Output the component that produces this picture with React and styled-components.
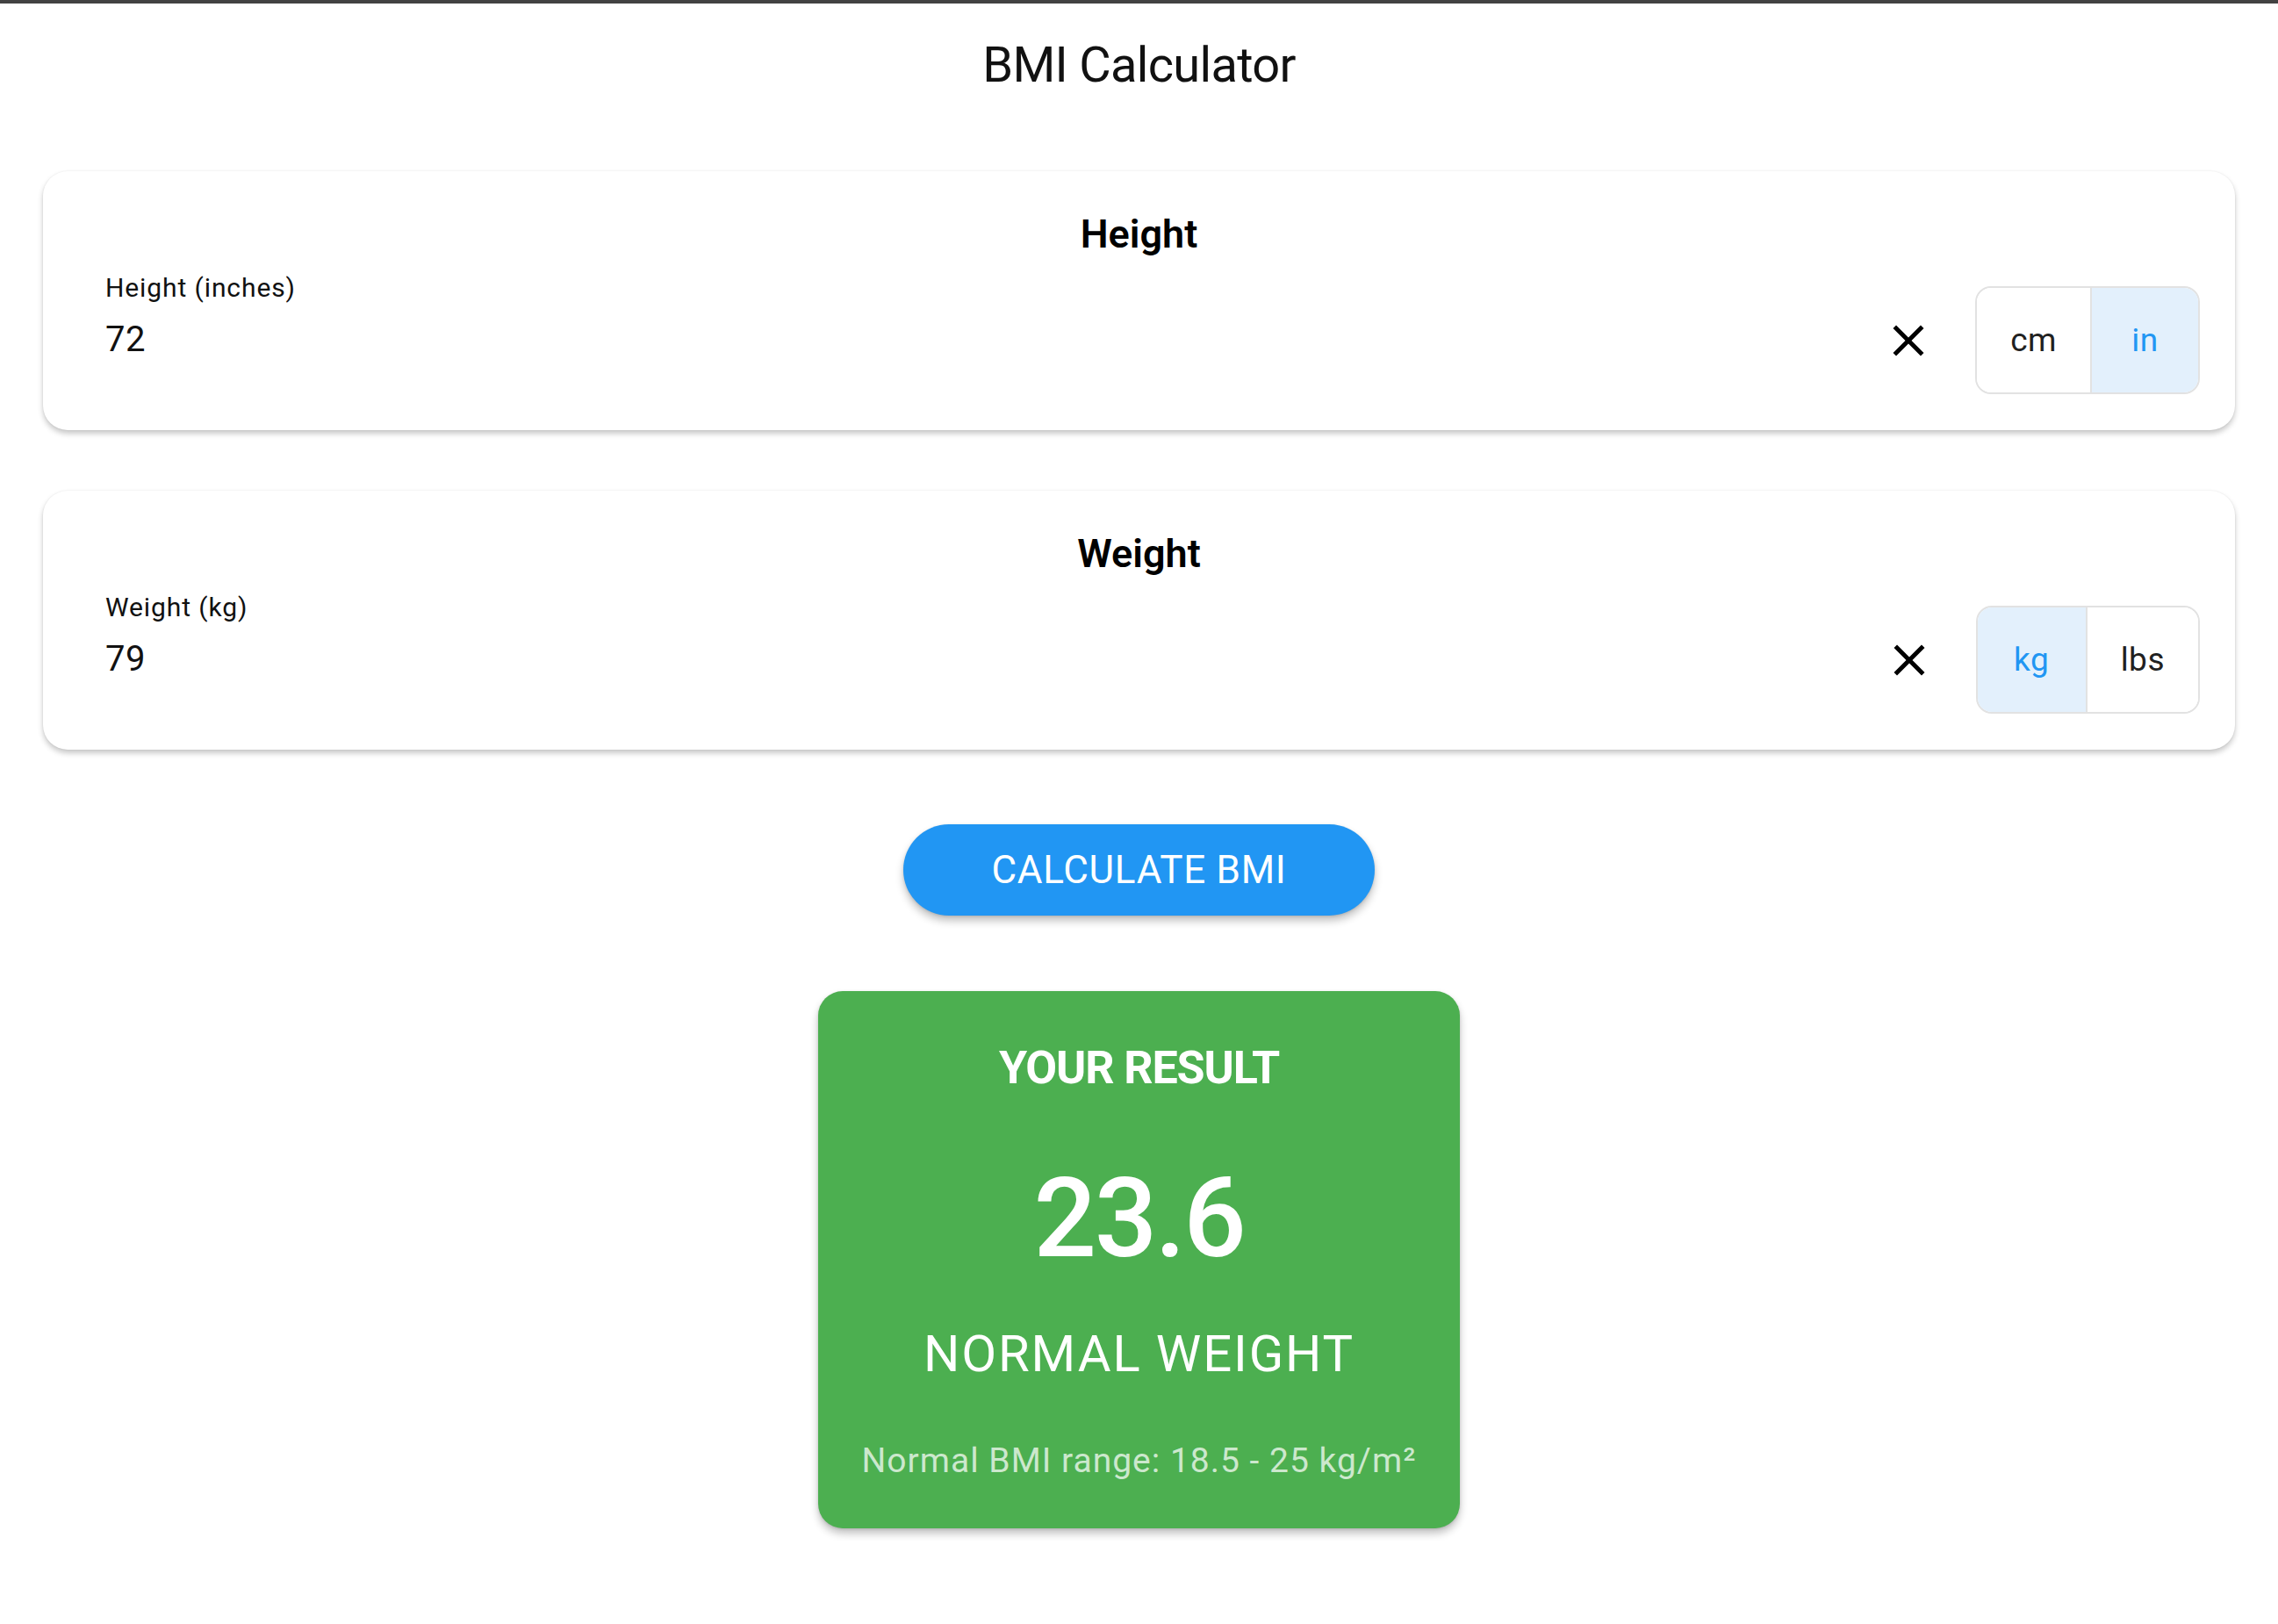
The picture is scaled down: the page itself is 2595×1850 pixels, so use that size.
import React, { useState } from 'react';
import styled, { createGlobalStyle } from 'styled-components';

const GlobalStyle = createGlobalStyle`
	* {
		box-sizing: border-box;
	}
	body {
		margin: 0;
		background: #ffffff;
		font-family: Roboto, 'Noto Sans', 'Liberation Sans', sans-serif;
		color: #000000;
	}
`;

const TopBar = styled.div`
	height: 4px;
	background: #424242;
`;

const Page = styled.main`
	display: flex;
	flex-direction: column;
	align-items: center;
	padding: 37px 49px 80px;
`;

const Title = styled.h1`
	margin: 0 0 87px;
	font-size: 56px;
	font-weight: 400;
	line-height: 1.2;
	letter-spacing: -0.7px;
	color: #111111;
`;

const Card = styled.section`
	width: 100%;
	background: #ffffff;
	border-radius: 28px;
	padding: 45px 40px 41px;
	box-shadow: 0 4px 6px rgba(0, 0, 0, 0.22), 0 0 2px rgba(0, 0, 0, 0.08);
	margin-bottom: ${props => props.gap || 0}px;
`;

const CardTitle = styled.h2`
	margin: 0 0 16px;
	text-align: center;
	font-size: 45px;
	font-weight: 600;
	line-height: 1.2;
`;

const Row = styled.div`
	display: flex;
	align-items: flex-start;
`;

const Field = styled.div`
	flex: 1;
	display: flex;
	flex-direction: column;
	gap: 17px;
	padding-left: 31px;
`;

const Label = styled.span`
	font-size: 30px;
	line-height: 1.2;
	color: #111111;
	letter-spacing: 0.9px;
`;

const Value = styled.span`
	font-size: 40px;
	line-height: 1.2;
	color: #111111;
	letter-spacing: 0.5px;
`;

const Actions = styled.div`
	display: flex;
	align-items: center;
	gap: 46px;
	margin-top: 16px;
`;

const ClearButton = styled.button`
	display: flex;
	align-items: center;
	justify-content: center;
	width: 60px;
	height: 60px;
	padding: 0;
	border: none;
	background: none;
	cursor: pointer;
	& svg {
		width: 60px;
		height: 60px;
		fill: #000000;
	}
`;

const Toggle = styled.div`
	display: flex;
	height: 123px;
	border: 2px solid #e2e2e2;
	border-radius: 18px;
	overflow: hidden;
`;

const Segment = styled.button`
	min-width: 123px;
	padding: 0 38px;
	border: none;
	border-left: ${props => (props.first ? 'none' : '2px solid #e2e2e2')};
	background: ${props => (props.active ? '#e3f0fc' : '#ffffff')};
	color: ${props => (props.active ? '#2196f3' : '#212121')};
	font-family: Roboto, 'Noto Sans', sans-serif;
	font-size: 37px;
	letter-spacing: 0.5px;
	cursor: pointer;
`;

const CalculateButton = styled.button`
	width: 537px;
	height: 104px;
	margin: 85px 0 86px;
	border: none;
	border-radius: 52px;
	background: #2196f3;
	color: #ffffff;
	font-family: Roboto, 'Noto Sans', sans-serif;
	font-size: 44px;
	letter-spacing: 0.7px;
	box-shadow: 0 6px 10px rgba(0, 0, 0, 0.24), 0 1px 3px rgba(0, 0, 0, 0.12);
	cursor: pointer;
`;

const Result = styled.div`
	display: flex;
	flex-direction: column;
	align-items: center;
	padding: 57px 50px 53px;
	background: #4caf50;
	border-radius: 28px;
	color: #ffffff;
	box-shadow: 0 6px 10px rgba(0, 0, 0, 0.24), 0 1px 3px rgba(0, 0, 0, 0.12);
`;

const ResultHeading = styled.div`
	font-size: 52px;
	font-weight: 700;
	line-height: 1.2;
	letter-spacing: -1.1px;
`;

const ResultValue = styled.div`
	margin-top: 64px;
	font-size: 126px;
	font-weight: 500;
	line-height: 1.2;
	letter-spacing: -2.5px;
`;

const ResultCategory = styled.div`
	margin-top: 44px;
	font-size: 58px;
	font-weight: 400;
	line-height: 1.2;
	letter-spacing: 1.9px;
`;

const ResultRange = styled.div`
	margin-top: 64px;
	font-size: 39px;
	line-height: 1.2;
	letter-spacing: 1px;
	color: rgba(255, 255, 255, 0.72);
`;

const CloseIcon = () => (
	<svg viewBox="0 0 24 24">
		<path d="M19 6.41 17.59 5 12 10.59 6.41 5 5 6.41 10.59 12 5 17.59 6.41 19 12 13.41 17.59 19 19 17.59 13.41 12z" />
	</svg>
);

const MeasureCard = ({ title, label, value, units, unit, onUnit, gap }) => (
	<Card gap={gap}>
		<CardTitle>{title}</CardTitle>
		<Row>
			<Field>
				<Label>{label}</Label>
				<Value>{value}</Value>
			</Field>
			<Actions>
				<ClearButton aria-label="clear">
					<CloseIcon />
				</ClearButton>
				<Toggle>
					{units.map((u, i) => (
						<Segment key={u} first={i === 0} active={u === unit} onClick={() => onUnit(u)}>
							{u}
						</Segment>
					))}
				</Toggle>
			</Actions>
		</Row>
	</Card>
);

const App = () => {
	const [heightUnit, setHeightUnit] = useState('in');
	const [weightUnit, setWeightUnit] = useState('kg');

	return (
		<>
			<GlobalStyle />
			<TopBar />
			<Page>
				<Title>BMI Calculator</Title>
				<MeasureCard
					title="Height"
					label="Height (inches)"
					value="72"
					units={['cm', 'in']}
					unit={heightUnit}
					onUnit={setHeightUnit}
					gap={69}
				/>
				<MeasureCard
					title="Weight"
					label="Weight (kg)"
					value="79"
					units={['kg', 'lbs']}
					unit={weightUnit}
					onUnit={setWeightUnit}
				/>
				<CalculateButton>CALCULATE BMI</CalculateButton>
				<Result>
					<ResultHeading>YOUR RESULT</ResultHeading>
					<ResultValue>23.6</ResultValue>
					<ResultCategory>NORMAL WEIGHT</ResultCategory>
					<ResultRange>Normal BMI range: 18.5 - 25 kg/m²</ResultRange>
				</Result>
			</Page>
		</>
	);
};

export default App;
